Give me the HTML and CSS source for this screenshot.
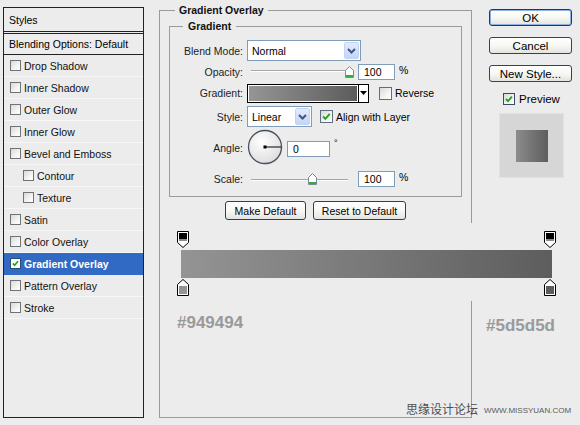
FILE: index.html
```html
<!DOCTYPE html>
<html lang="en">
<head>
<meta charset="utf-8">
<title>Layer Style - Gradient Overlay</title>
<link rel="stylesheet" href="styles.css">
</head>
<body>
<div class="dialog">
  <aside class="styles-panel">
    <div class="panel-head">Styles</div>
    <div class="panel-blend">Blending Options: Default</div>
    <ul class="style-list">
      <li class="style-item"><span class="cb small"></span>Drop Shadow</li>
      <li class="style-item"><span class="cb small"></span>Inner Shadow</li>
      <li class="style-item"><span class="cb small"></span>Outer Glow</li>
      <li class="style-item"><span class="cb small"></span>Inner Glow</li>
      <li class="style-item"><span class="cb small"></span>Bevel and Emboss</li>
      <li class="style-item sub"><span class="cb small"></span>Contour</li>
      <li class="style-item sub"><span class="cb small"></span>Texture</li>
      <li class="style-item"><span class="cb small"></span>Satin</li>
      <li class="style-item"><span class="cb small"></span>Color Overlay</li>
      <li class="style-item active"><span class="cb small white"><svg viewBox="0 0 11 11" width="11" height="11"><path d="M2.2 5.4 L4.4 7.6 L8.6 2.8" fill="none" stroke="#21a121" stroke-width="2"/></svg></span>Gradient Overlay</li>
      <li class="style-item"><span class="cb small"></span>Pattern Overlay</li>
      <li class="style-item"><span class="cb small"></span>Stroke</li>
    </ul>
  </aside>

  <section class="main-group">
    <div class="group-title">Gradient Overlay</div>
    <div class="sub-group">
      <div class="group-title sub-title">Gradient</div>
      <div class="form">
        <div class="row r1">
          <span class="label">Blend Mode:</span>
          <div class="select blend"><span class="select-text">Normal</span><span class="select-btn"><svg viewBox="0 0 9 6" width="9" height="6"><path d="M1 1 L4.5 4.5 L8 1" fill="none" stroke="#3d5587" stroke-width="2"/></svg></span></div>
        </div>
        <div class="row r2">
          <span class="label">Opacity:</span>
          <div class="slider opacity"><span class="thumb" style="left:94px"><svg viewBox="0 0 9 12" width="9" height="12"><path d="M4.5 0.5 L8.5 4.5 V11.5 H0.5 V4.5 Z" fill="#fff" stroke="#7c8a99"/><rect x="1" y="9" width="7" height="2" fill="#2fae3a"/></svg></span></div>
          <span class="num">100</span>
          <span class="unit">%</span>
        </div>
        <div class="row r3">
          <span class="label">Gradient:</span>
          <div class="grad-picker"><span class="grad-fill"></span><span class="grad-btn"><svg viewBox="0 0 7 4" width="7" height="4"><path d="M0 0 H7 L3.5 4 Z" fill="#000"/></svg></span></div>
          <span class="cb reverse-cb"></span>
          <span class="cb-label">Reverse</span>
        </div>
        <div class="row r4">
          <span class="label">Style:</span>
          <div class="select style-sel"><span class="select-text">Linear</span><span class="select-btn"><svg viewBox="0 0 9 6" width="9" height="6"><path d="M1 1 L4.5 4.5 L8 1" fill="none" stroke="#3d5587" stroke-width="2"/></svg></span></div>
          <span class="cb align-cb"><svg viewBox="0 0 13 13" width="11" height="11"><path d="M2.5 6.5 L5.2 9.2 L10.3 3.4" fill="none" stroke="#21a121" stroke-width="2.2"/></svg></span>
          <span class="cb-label">Align with Layer</span>
        </div>
        <div class="row r5">
          <span class="label">Angle:</span>
          <svg class="dial" viewBox="0 0 37 37" width="37" height="37">
            <defs>
              <radialGradient id="dialfill" cx="40%" cy="35%" r="70%">
                <stop offset="0" stop-color="#ffffff"/>
                <stop offset="1" stop-color="#dcdcdc"/>
              </radialGradient>
            </defs>
            <circle cx="19" cy="19" r="16.5" fill="#c8c8c8" opacity="0.6"/>
            <circle cx="18" cy="18" r="16.5" fill="url(#dialfill)" stroke="#47505c" stroke-width="1.3"/>
            <line x1="18" y1="18" x2="34" y2="18" stroke="#000" stroke-width="1"/>
            <rect x="16.5" y="16.5" width="3" height="3" fill="#000"/>
          </svg>
          <span class="num angle">0</span>
          <span class="deg">°</span>
        </div>
        <div class="row r6">
          <span class="label">Scale:</span>
          <div class="slider scale"><span class="thumb" style="left:57px"><svg viewBox="0 0 9 12" width="9" height="12"><path d="M4.5 0.5 L8.5 4.5 V11.5 H0.5 V4.5 Z" fill="#fff" stroke="#7c8a99"/><rect x="1" y="9" width="7" height="2" fill="#2fae3a"/></svg></span></div>
          <span class="num">100</span>
          <span class="unit">%</span>
        </div>
      </div>
    </div>

    <div class="defaults">
      <button class="btn make">Make Default</button>
      <button class="btn reset">Reset to Default</button>
    </div>

    <div class="grad-editor">
      <div class="stops">
        <svg viewBox="0 0 12 17" width="12" height="17"><path d="M0.5 0.5 H11.5 V11.5 L6 16.5 L0.5 11.5 Z" fill="#fff" stroke="#000"/><rect x="2" y="2" width="8" height="6" fill="#000"/><rect x="2" y="8" width="8" height="2" fill="#8a8a8a"/></svg>
        <svg viewBox="0 0 12 17" width="12" height="17"><path d="M0.5 0.5 H11.5 V11.5 L6 16.5 L0.5 11.5 Z" fill="#fff" stroke="#000"/><rect x="2" y="2" width="8" height="6" fill="#000"/><rect x="2" y="8" width="8" height="2" fill="#8a8a8a"/></svg>
      </div>
      <div class="grad-bar"></div>
      <div class="stops">
        <svg viewBox="0 0 12 17" width="12" height="17"><path d="M6 0.5 L11.5 5.5 V16.5 H0.5 V5.5 Z" fill="#fff" stroke="#000"/><rect x="2" y="7" width="8" height="8" fill="#949494"/></svg>
        <svg viewBox="0 0 12 17" width="12" height="17"><path d="M6 0.5 L11.5 5.5 V16.5 H0.5 V5.5 Z" fill="#fff" stroke="#000"/><rect x="2" y="7" width="8" height="8" fill="#5d5d5d"/></svg>
      </div>
    </div>

    <div class="stop-labels">
      <span class="hex">#949494</span>
      <span class="hex right">#5d5d5d</span>
    </div>
  </section>

  <div class="actions">
    <button class="btn side ok">OK</button>
    <button class="btn side">Cancel</button>
    <button class="btn side">New Style...</button>
    <div class="preview-row">
      <span class="cb preview-cb"><svg viewBox="0 0 13 13" width="10" height="10"><path d="M2.5 6.5 L5.2 9.2 L10.3 3.4" fill="none" stroke="#21a121" stroke-width="2.4"/></svg></span>
      <span class="preview-label">Preview</span>
    </div>
    <div class="preview-box"><span class="preview-swatch"></span></div>
  </div>
</div>
<div class="watermark"><span class="wm-cn">思缘设计论坛</span><span class="wm-url">WWW.MISSYUAN.COM</span></div>
</body>
</html>
```

FILE: styles.css
```css
* { box-sizing: border-box; }

html, body {
  margin: 0;
  padding: 0;
}

body {
  width: 580px;
  height: 425px;
  overflow: hidden;
  position: relative;
  background: #ececec;
  font-family: "Liberation Sans", Arial, sans-serif;
  font-size: 10.5px;
  color: #000;
}

.dialog {
  display: flex;
  align-items: flex-start;
  padding-left: 3px;
}

/* ---------- Left styles list ---------- */
.styles-panel {
  width: 141px;
  height: 411px;
  margin-top: 7px;
  border: 1px solid #222;
  display: flex;
  flex-direction: column;
}

.panel-head {
  height: 26px;
  border-bottom: 3px double #222;
  padding: 0 0 0 5px;
  display: flex;
  align-items: center;
}

.panel-blend {
  height: 21px;
  border-bottom: 1px solid #222;
  padding-left: 5px;
  display: flex;
  align-items: center;
}

.style-list {
  list-style: none;
  margin: 0;
  padding: 0;
}

.style-item {
  height: 22px;
  border-bottom: 1px solid #f7f7f7;
  display: flex;
  align-items: center;
  padding-left: 6px;
  color: #111;
}

.style-item.sub {
  padding-left: 19px;
}

.style-item.active {
  background: #316ac5;
  color: #fff;
  font-weight: bold;
  border-bottom-color: #316ac5;
}

/* ---------- checkboxes ---------- */
.cb {
  width: 13px;
  height: 13px;
  border: 1px solid #5f6f82;
  background: linear-gradient(135deg, #d9d9d4 0%, #f4f4f2 60%, #ffffff 100%);
  display: inline-flex;
  align-items: center;
  justify-content: center;
  flex: none;
}

.cb.small {
  width: 11px;
  height: 11px;
  margin-right: 3px;
  border-color: #6e7378;
}

.cb.white {
  background: #fff;
  border-color: #2c4d7a;
}

.cb-label {
  margin-left: 3px;
}

/* ---------- main group ---------- */
.main-group {
  width: 313px;
  height: 408px;
  margin-top: 10px;
  margin-left: 15px;
  border: 1px solid #9a9a9a;
  padding: 0 9px;
  display: flex;
  flex-direction: column;
}

.group-title {
  align-self: flex-start;
  margin-top: -7px;
  margin-left: 6px;
  padding: 0 4px;
  line-height: 13px;
  height: 13px;
  background: #ececec;
  font-weight: bold;
  color: #111;
}

.sub-group {
  margin-top: 9px;
  border: 1px solid #9a9a9a;
  height: 171px;
  display: flex;
  flex-direction: column;
}

.sub-title {
  margin-left: 13px;
  padding: 0 5px;
}

.form {
  margin-top: 6px;
  display: flex;
  flex-direction: column;
}

.row {
  display: flex;
  align-items: center;
}

.r1 { height: 23px; }
.r2 { height: 20px; }
.r3 { height: 22px; }
.r4 { height: 25px; }
.r5 { height: 37px; }
.r6 { height: 25px; }

.label {
  width: 73px;
  margin-right: 4px;
  text-align: right;
  color: #222;
  flex: none;
}

/* select */
.select {
  height: 21px;
  border: 1px solid #7f9db9;
  background: #fff;
  display: flex;
  align-items: stretch;
}

.select.blend { width: 114px; }
.select.style-sel { width: 65px; }

.select-text {
  flex: 1;
  display: flex;
  align-items: center;
  padding-left: 4px;
}

.select-btn {
  width: 15px;
  margin: 1px;
  border: 1px solid #c3d3f5;
  border-radius: 2px;
  background: linear-gradient(#e3ebfd, #c4d5f8);
  display: flex;
  align-items: center;
  justify-content: center;
}

/* sliders */
.slider {
  position: relative;
  height: 12px;
  margin-left: 4px;
  width: 103px;
  flex: none;
}

.slider.opacity {
  background:
    linear-gradient(#a6a6a6, #a6a6a6) 0 4px / 95px 1px no-repeat,
    linear-gradient(#ffffff, #ffffff) 0 5px / 95px 1px no-repeat;
}

.slider.scale {
  background:
    linear-gradient(#a6a6a6, #a6a6a6) 0 6px / 97px 1px no-repeat,
    linear-gradient(#ffffff, #ffffff) 0 7px / 97px 1px no-repeat;
}

.thumb {
  position: absolute;
  top: 0;
  width: 9px;
  height: 12px;
  display: block;
}

.thumb svg { display: block; }

.num {
  height: 16px;
  border: 1px solid #7f9db9;
  background: #fff;
  padding-left: 5px;
  display: flex;
  align-items: center;
  width: 37px;
  margin-left: 4px;
  flex: none;
}

.num.angle {
  width: 43px;
  margin-left: 3px;
  margin-top: 3px;
}

.unit {
  margin-left: 4px;
  margin-top: -4px;
}

.deg {
  margin-left: 4px;
  margin-top: -10px;
  font-size: 9px;
}

.dial {
  display: block;
  flex: none;
}

/* gradient picker */
.grad-picker {
  width: 122px;
  height: 19px;
  border: 1px solid #000;
  display: flex;
  background: #fff;
}

.grad-fill {
  flex: 1;
  margin: 1px;
  background: linear-gradient(to right, #959595, #5c5c5c);
}

.grad-btn {
  width: 10px;
  border-left: 1px solid #000;
  display: flex;
  align-items: center;
  justify-content: center;
  background: #fff;
}

.reverse-cb { margin-left: 10px; }
.align-cb { margin-left: 8px; }

/* buttons */
.btn {
  font-family: "Liberation Sans", Arial, sans-serif;
  color: #000;
  border: 1px solid #22426a;
  border-radius: 3px;
  background: linear-gradient(#ffffff 0%, #f7f7f4 50%, #e4e4df 100%);
  padding: 0;
  display: flex;
  align-items: center;
  justify-content: center;
}

.defaults {
  margin-top: 4px;
  display: flex;
  justify-content: center;
  gap: 7px;
}

.defaults .btn {
  height: 19px;
  font-size: 10.5px;
}

.btn.make { width: 81px; }
.btn.reset { width: 93px; }

/* gradient editor */
.grad-editor {
  margin-top: 3px;
  margin-right: -110px;
  background: #ececec;
  padding: 8px 0 5px 12px;
  display: flex;
  flex-direction: column;
  position: relative;
}

.stops {
  width: 379px;
  margin-left: -4px;
  display: flex;
  justify-content: space-between;
}

.stops svg { display: block; }

.grad-bar {
  width: 371px;
  height: 28px;
  margin: 2px 0 1px;
  background: linear-gradient(to right, #949494, #5d5d5d);
}

.stop-labels {
  margin-top: 12px;
  margin-left: 8px;
  display: grid;
  grid-template-columns: 309px auto;
  align-items: start;
}

.hex {
  font-size: 17px;
  font-weight: bold;
  line-height: 20px;
  color: #9a9a9a;
  white-space: nowrap;
}

.hex.right { margin-top: 3px; }

/* right column */
.actions {
  width: 83px;
  margin-left: 17px;
  margin-top: 9px;
  display: flex;
  flex-direction: column;
}

.btn.side {
  height: 17px;
  font-size: 11.5px;
  margin-bottom: 11px;
  border-color: #2a4466;
}

.btn.ok {
  border-color: #1a3a66;
  box-shadow: inset 0 0 0 1px #8db2e3;
}

.preview-row {
  margin-top: -2px;
  height: 15px;
  display: flex;
  align-items: center;
  padding-left: 14px;
}

.preview-cb {
  width: 12px;
  height: 12px;
  border-color: #3a4c63;
}

.preview-label {
  margin-left: 4px;
  font-size: 11.5px;
}

.preview-box {
  margin-top: 7px;
  margin-left: 10px;
  width: 65px;
  height: 65px;
  background: #d6d6d6;
  border: 1px solid #e2e2e2;
  display: flex;
  align-items: center;
  justify-content: center;
}

.preview-swatch {
  width: 32px;
  height: 32px;
  background: linear-gradient(to right, #8c8c8c, #5d5d5d);
}

/* watermark */
.watermark {
  position: absolute;
  left: 406px;
  top: 402px;
  display: flex;
  align-items: center;
  color: #4f4f4f;
}

.wm-cn {
  font-family: "Noto Sans CJK SC", "Liberation Sans", sans-serif;
  font-size: 12px;
  line-height: 14px;
}

.wm-url {
  margin-left: 6px;
  font-size: 8px;
  margin-top: 2px;
  color: #5a5a5a;
}
```
